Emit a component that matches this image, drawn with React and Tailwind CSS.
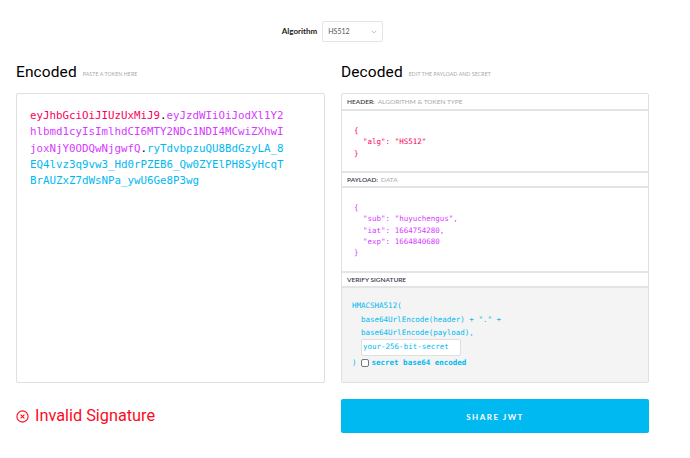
import React from "react";
import { ChevronDown } from "lucide-react";

const mono = "font-['DejaVu_Sans_Mono','Liberation_Mono',monospace]";
const sans = "font-['Lato','Liberation_Sans',sans-serif]";
const roboto = "font-['Roboto','Liberation_Sans',sans-serif]";

function Heading({ title, hint }) {
  return (
    <div className="flex h-[18px] items-end gap-[6px]">
      <h2 className={`translate-y-[1px] text-[15.5px] leading-[18px] tracking-[0.1px] text-black ${roboto}`}>{title}</h2>
      <span className="pb-[1px] text-[5.2px] leading-[9px] tracking-[0.1px] text-[#a8a8a8] uppercase">{hint}</span>
    </div>
  );
}

function SectionTitle({ label, note, className }) {
  return (
    <div className={`flex h-[17px] items-center gap-[3px] border-b-2 border-[#e4e4e4] pl-[5px] text-[6.5px] uppercase ${className || ""}`}>
      <span className="font-semibold text-[#3a3a4a]">{label}</span>
      {note && <span className="text-[#a8a8a8]">{note}</span>}
    </div>
  );
}

export default function App() {
  return (
    <div className={`h-[458px] w-[690px] overflow-hidden bg-white pt-[21px] pl-4 ${sans}`}>
      <div className="flex w-[633px] items-center justify-center gap-[5px]">
        <span className="pb-[2px] text-[8px] font-bold text-[#222]">Algorithm</span>
        <div className="flex h-[21px] w-[61px] items-center justify-between rounded-[2px] border border-[#e4e4e4] pr-[4px] pl-[5px] text-[7px] text-[#555]">
          HS512
          <ChevronDown size={8} strokeWidth={1.5} className="text-[#888]" />
        </div>
      </div>

      <div className="mt-[20px] grid w-[633px] grid-cols-[309px_308px] gap-x-[16px]">
        <Heading title="Encoded" hint="Paste a token here" />
        <Heading title="Decoded" hint="Edit the payload and secret" />

        <div className={`mt-[13px] h-[290px] rounded-[2px] border border-[#dfdfdf] pt-[14px] pl-[13px] text-[10.8px] leading-[16.35px] ${mono}`}>
          <div className="whitespace-nowrap">
            <span className="text-[#fb015b]">eyJhbGciOiJIUzUxMiJ9</span>
            <span className="text-black">.</span>
            <span className="text-[#d63aff]">eyJzdWIiOiJodXl1Y2</span>
          </div>
          <div className="whitespace-nowrap text-[#d63aff]">hlbmd1cyIsImlhdCI6MTY2NDc1NDI4MCwiZXhwI</div>
          <div className="whitespace-nowrap">
            <span className="text-[#d63aff]">joxNjY0ODQwNjgwfQ</span>
            <span className="text-black">.</span>
            <span className="text-[#00b9f1]">ryTdvbpzuQU8BdGzyLA_8</span>
          </div>
          <div className="whitespace-nowrap text-[#00b9f1]">EQ4lvz3q9vw3_Hd0rPZEB6_Qw0ZYElPH8SyHcqT</div>
          <div className="whitespace-nowrap text-[#00b9f1]">BrAUZxZ7dWsNPa_ywU6Ge8P3wg</div>
        </div>

        <div className="mt-[13px] flex h-[290px] flex-col rounded-[2px] border border-[#dfdfdf]">
          <SectionTitle label="Header:" note="Algorithm & token type" />
          <pre className={`h-[60px] pt-[14px] pl-[12px] text-[7.5px] leading-[11.3px] text-[#fb015b] ${mono}`}>
            {'{\n  "alg": "HS512"\n}'}
          </pre>
          <SectionTitle label="Payload:" note="Data" className="border-t-2" />
          <pre className={`h-[83px] pt-[14px] pl-[12px] text-[7.5px] leading-[11.3px] text-[#d63aff] ${mono}`}>
            {'{\n  "sub": "huyuchengus",\n  "iat": 1664754280,\n  "exp": 1664840680\n}'}
          </pre>
          <SectionTitle label="Verify signature" className="border-t-2" />
          <div className={`flex-1 bg-[#f4f4f4] pt-[11px] pl-[10px] text-[7.5px] leading-[13.6px] text-[#00b9f1] ${mono}`}>
            <div>HMACSHA512(</div>
            <div className="pl-[9px]">base64UrlEncode(header) + "." +</div>
            <div className="pl-[9px]">base64UrlEncode(payload),</div>
            <div className="mt-[-1px] ml-[9px] flex h-[17px] w-[100px] items-center rounded-[2px] border border-[#dfdfdf] bg-white pl-[1px]">
              your-256-bit-secret
            </div>
            <div className="flex items-center gap-[4px]">
              <span>)</span>
              <span className="h-[8px] w-[8px] rounded-[2px] border border-[#777] bg-white" />
              <span className="ml-[-1px] font-bold">secret base64 encoded</span>
            </div>
          </div>
        </div>

        <div className={`mt-[23px] flex items-center gap-[6px] self-start text-[#fb0a1e] ${roboto}`}>
          <svg width="13" height="13" viewBox="0 0 13 13" fill="none" stroke="currentColor" strokeWidth="1.1">
            <circle cx="6.5" cy="6.5" r="5.6" />
            <path d="M4.6 4.6l3.8 3.8M8.4 4.6l-3.8 3.8" />
          </svg>
          <span className="text-[16.3px] leading-[20px]">Invalid Signature</span>
        </div>

        <button className="mt-[16px] h-[34px] rounded-[2px] bg-[#00b9f1] pt-[1px] text-[8px] font-bold tracking-[1.5px] text-white uppercase">
          Share JWT
        </button>
      </div>
    </div>
  );
}
